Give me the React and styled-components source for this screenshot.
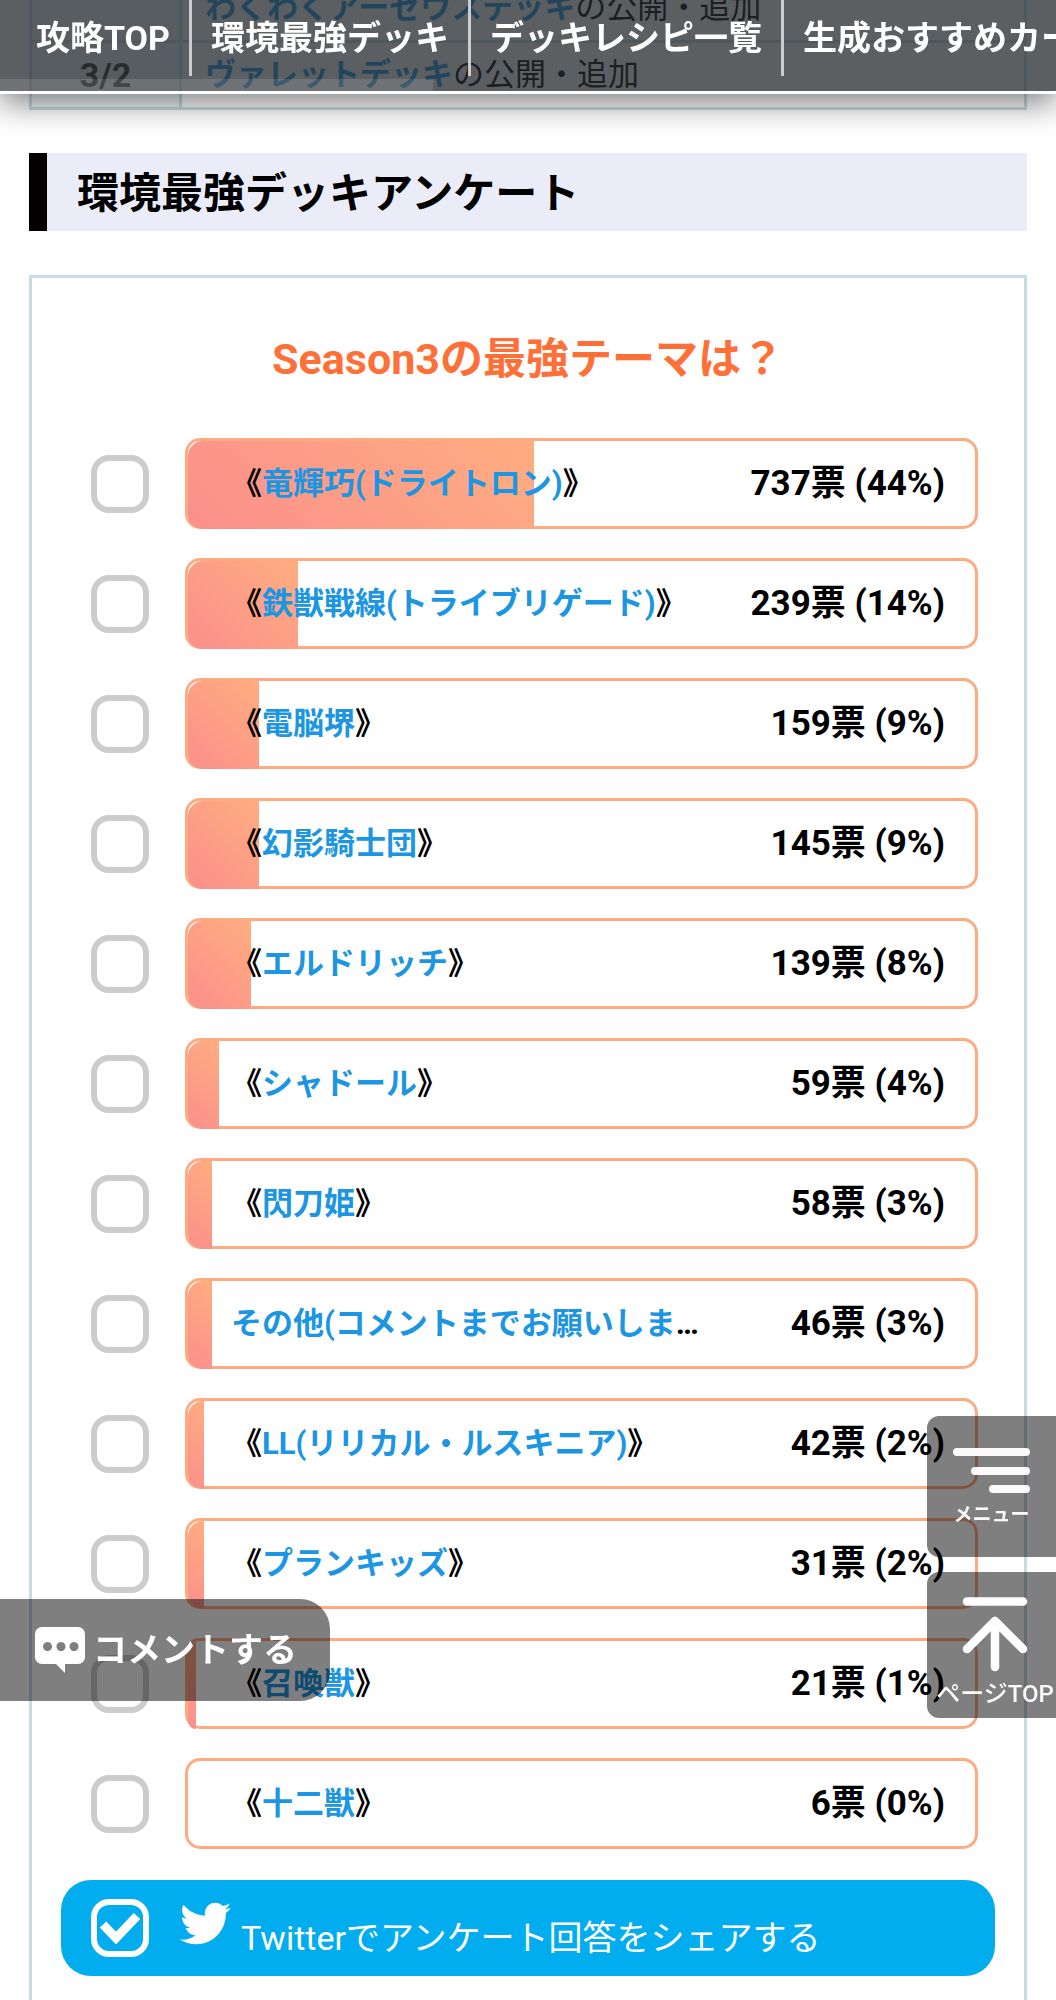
import React from "react";
import styled, { createGlobalStyle } from "styled-components";
import { FaTwitter } from "react-icons/fa";

const GlobalStyle = createGlobalStyle`
  *, *::before, *::after { box-sizing: border-box; }
  body {
    margin: 0;
    background: #fff;
    color: #000;
    font-family: Roboto, "Noto Sans CJK JP", sans-serif;
  }
  a { color: #1c96e2; text-decoration: none; }
`;

const NavBar = styled.nav`
  position: fixed;
  top: 0;
  left: 0;
  right: 0;
  z-index: 2;
  display: flex;
  flex-direction: column;
  background: rgba(36, 42, 46, 0.75);
  background-clip: padding-box;
  border-bottom: 3px solid rgba(255, 255, 255, 0.85);
  box-shadow: 0 9px 30px rgba(0, 0, 0, 0.5);
`;

const NavList = styled.ul`
  display: flex;
  margin: 0;
  padding: 0 0 0 17px;
  list-style: none;
  overflow: hidden;
`;

const NavItem = styled.li`
  flex: none;
  padding: 0 19px;
  border-right: 3px solid #ccc;
`;

const NavLink = styled.a`
  && { color: #fff; }
  font-size: 34px;
  line-height: 76px;
  font-weight: 700;
  white-space: nowrap;
`;

const ScrollTrack = styled.div`
  height: 15px;
  padding-top: 3px;
`;

const ScrollThumb = styled.div`
  width: 41%;
  height: 12px;
  background: rgba(255, 255, 255, 0.12);
`;

const Main = styled.main`
  margin-top: -27px;
  padding: 0 29px;
`;

const UpdateTable = styled.table`
  width: 100%;
  border-collapse: collapse;
  font-size: 31px;
  line-height: 40px;

  th, td {
    height: 67px;
    padding: 0 23px;
    border: 3px solid #c6dde5;
    text-align: left;
    font-weight: 400;
  }
  th {
    width: 150px;
    background: #f0f6f7;
    text-align: center;
    font-weight: 700;
    color: #333;
    font-size: 34px;
  }
  td a { font-weight: 700; }
`;

const SectionHeading = styled.h2`
  margin: 43px 0 44px;
  padding: 4px 0 0 30px;
  border-left: 18px solid #050000;
  background: #eaedf7;
  font-size: 42px;
  line-height: 74px;
  font-weight: 700;
`;

const Panel = styled.form`
  padding: 51px 29px 24px;
  border: 3px solid #c6dde5;
  border-bottom: 0;
`;

const Question = styled.h3`
  margin: 0 0 49px;
  color: #ff7038;
  font-size: 43px;
  line-height: 60px;
  font-weight: 700;
  text-align: center;
`;

const OptionList = styled.ul`
  display: grid;
  gap: 29px;
  margin: 0 0 31px;
  padding: 0 17px 0 30px;
  list-style: none;
`;

const OptionRow = styled.li`
  display: flex;
  align-items: center;
  gap: 36px;
`;

const CheckBox = styled.input`
  appearance: none;
  flex: none;
  width: 58px;
  height: 58px;
  margin: 0;
  border: 6px solid ${(p) => p.$color};
  border-radius: 18px;
`;

const ResultBox = styled.div`
  position: relative;
  flex: 1;
  min-width: 0;
  height: 91px;
  display: flex;
  align-items: center;
  justify-content: space-between;
  padding: 0 30px 0 43px;
  border: 3px solid #ffab82;
  border-radius: 15px;
`;

const BarTrack = styled.div`
  position: absolute;
  inset: 0 0 -3px 0;
`;

const Bar = styled.div`
  height: 100%;
  border-radius: 15px 0 0 15px;
  background: linear-gradient(45deg, #fa8f8c, #ffad80);
`;

const OptionLabel = styled.label`
  position: relative;
  flex: 0 1 480px;
  min-width: 0;
  overflow: hidden;
  text-overflow: ellipsis;
  white-space: nowrap;
  font-size: 31px;
  line-height: 48px;
  font-weight: 700;
`;

const Votes = styled.span`
  position: relative;
  flex: none;
  font-size: 35px;
  line-height: 48px;
  font-weight: 700;
`;

const ShareBar = styled.label`
  display: flex;
  align-items: center;
  height: 96px;
  padding: 0 30px;
  border-radius: 30px;
  background: #01acef;
  color: #fff;
`;

const CheckStack = styled.span`
  display: grid;
  place-items: center;
  margin-right: 31px;

  > * { grid-area: 1 / 1; }
  svg { pointer-events: none; }
`;

const Bird = styled(FaTwitter)`
  width: 51px;
  height: 51px;
  margin: 0 10px 10px 0;
`;

const ShareText = styled.span`
  padding-top: 20px;
  font-size: 34px;
  line-height: 48px;
`;

const CommentButton = styled.button`
  position: fixed;
  left: 0;
  bottom: 299px;
  z-index: 1;
  display: flex;
  align-items: center;
  gap: 8px;
  height: 102px;
  padding: 0 33px 0 35px;
  border: 0;
  border-radius: 0 30px 30px 0;
  background: rgba(0, 0, 0, 0.5);
  color: #fff;
  font-family: inherit;
  font-size: 34px;
  line-height: 48px;
  font-weight: 700;
`;

const SideButtons = styled.div`
  position: fixed;
  right: 0;
  bottom: 282px;
  z-index: 1;
  display: grid;
  gap: 15px;
  width: 129px;
`;

const SideButton = styled.button`
  display: flex;
  flex-direction: column;
  align-items: center;
  gap: 7px;
  height: ${(p) => p.$height}px;
  padding: ${(p) => p.$padding};
  border: 0;
  border-radius: 12px 0 0 12px;
  background: rgba(0, 0, 0, 0.5);
  color: #fafafa;
  font-family: inherit;
  font-size: ${(p) => p.$size}px;
  line-height: 30px;
  font-weight: ${(p) => p.$weight};
  white-space: nowrap;
`;

const navItems = ["攻略TOP", "環境最強デッキ", "デッキレシピ一覧", "生成おすすめカード"];

const options = [
  { name: "竜輝巧(ドライトロン)", votes: 737, pct: 44 },
  { name: "鉄獣戦線(トライブリゲード)", votes: 239, pct: 14 },
  { name: "電脳堺", votes: 159, pct: 9 },
  { name: "幻影騎士団", votes: 145, pct: 9 },
  { name: "エルドリッチ", votes: 139, pct: 8 },
  { name: "シャドール", votes: 59, pct: 4 },
  { name: "閃刀姫", votes: 58, pct: 3 },
  { name: "その他(コメントまでお願いします)", votes: 46, pct: 3, plain: true },
  { name: "LL(リリカル・ルスキニア)", votes: 42, pct: 2 },
  { name: "プランキッズ", votes: 31, pct: 2 },
  { name: "召喚獣", votes: 21, pct: 1 },
  { name: "十二獣", votes: 6, pct: 0 },
];

function Option({ id, name, votes, pct, plain }) {
  return (
    <OptionRow>
      <CheckBox type="checkbox" id={id} $color="#ccc" />
      <ResultBox>
        <BarTrack>
          <Bar style={{ width: `${pct}%` }} />
        </BarTrack>
        <OptionLabel htmlFor={id}>
          {!plain && "《"}
          <a href="#deck">{name}</a>
          {!plain && "》"}
        </OptionLabel>
        <Votes>{`${votes}票 (${pct}%)`}</Votes>
      </ResultBox>
    </OptionRow>
  );
}

export default function App() {
  return (
    <>
      <GlobalStyle />
      <NavBar>
        <NavList>
          {navItems.map((item) => (
            <NavItem key={item}>
              <NavLink href="#nav">{item}</NavLink>
            </NavItem>
          ))}
        </NavList>
        <ScrollTrack>
          <ScrollThumb />
        </ScrollTrack>
      </NavBar>

      <Main>
        <UpdateTable>
          <tbody>
            <tr>
              <th scope="row" />
              <td><a href="#deck">わくわくアーゼウスデッキ</a>の公開・追加</td>
            </tr>
            <tr>
              <th scope="row">3/2</th>
              <td><a href="#deck">ヴァレットデッキ</a>の公開・追加</td>
            </tr>
          </tbody>
        </UpdateTable>

        <SectionHeading>環境最強デッキアンケート</SectionHeading>

        <Panel>
          <Question>Season3の最強テーマは？</Question>
          <OptionList>
            {options.map((o, i) => (
              <Option key={o.name} id={`option-${i}`} {...o} />
            ))}
          </OptionList>
          <ShareBar>
            <CheckStack>
              <CheckBox type="checkbox" defaultChecked $color="#fff" />
              <svg width="42" height="32" viewBox="0 0 42 32" aria-hidden="true">
                <path d="M4 12.5 17 26 38 4" fill="none" stroke="#fff" strokeWidth="9" />
              </svg>
            </CheckStack>
            <Bird aria-hidden="true" />
            <ShareText>Twitterでアンケート回答をシェアする</ShareText>
          </ShareBar>
        </Panel>
      </Main>

      <CommentButton type="button">
        <svg width="50" height="46" viewBox="0 0 50 46" aria-hidden="true">
          <path
            fill="#fff"
            fillRule="evenodd"
            d="M7 0H43a7 7 0 0 1 7 7V30a7 7 0 0 1-7 7H30V46L21 37H7a7 7 0 0 1-7-7V7a7 7 0 0 1 7-7Z M12.500 15a4.500 4.500 0 1 0 0.010 0Z M26 15a4.500 4.500 0 1 0 0.010 0Z M39 15a4.500 4.500 0 1 0 0.010 0Z"
          />
        </svg>
        コメントする
      </CommentButton>

      <SideButtons>
        <SideButton type="button" $height={141} $padding="32px 0 0" $size={19} $weight={700}>
          <svg width="77" height="45" viewBox="0 0 77 45" aria-hidden="true">
            <path d="M4 4H73M22 23H73M40 41H73" fill="none" stroke="currentColor" strokeWidth="8" strokeLinecap="round" />
          </svg>
          <span>メニュー</span>
        </SideButton>
        <SideButton type="button" $height={146} $padding="25px 0 0 7px" $size={24} $weight={500}>
          <svg width="66" height="75" viewBox="0 0 66 75" aria-hidden="true">
            <path
              d="M5 4.500H61M5 52 33 24 61 52M33 24V70"
              fill="none"
              stroke="#fff"
              strokeWidth="8.500"
              strokeLinecap="round"
              strokeLinejoin="round"
            />
          </svg>
          <span>ページTOP</span>
        </SideButton>
      </SideButtons>
    </>
  );
}
